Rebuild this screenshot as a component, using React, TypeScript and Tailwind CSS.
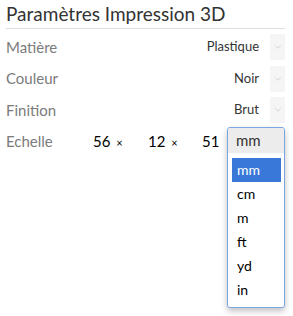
import { ChevronDown } from "lucide-react";

const rows = [
  { label: "Matière", value: "Plastique" },
  { label: "Couleur", value: "Noir" },
  { label: "Finition", value: "Brut" },
];

const units = ["mm", "cm", "m", "ft", "yd", "in"];

export default function App() {
  return (
    <div className="w-[293px] h-[316px] bg-white pl-[6px] pr-[8px] pt-[1px] font-['Lato',sans-serif] text-[#333]">
      <h1 className="text-[19px] leading-[26px] border-b border-[#ddd] pb-[1px]">Paramètres Impression 3D</h1>
      <div className="mt-[5px] flex flex-col gap-[5.5px]">
        {rows.map((r) => (
          <div key={r.label} className="flex items-center h-[26px]">
            <span className="text-[15px] text-[#7b7b7b] flex-1">{r.label}</span>
            <span className="text-[13px] mr-[11px]">{r.value}</span>
            <span className="w-[15px] h-[26px] bg-[#f5f5f5] flex items-center justify-center">
              <ChevronDown size={10} className="text-[#bdbdbd]" strokeWidth={1.5} />
            </span>
          </div>
        ))}
        <div className="flex items-start h-[26px] relative">
          <span className="text-[15px] text-[#7b7b7b] w-[87px] pt-[1px]">Echelle</span>
          <div className="flex items-center text-[15px] text-black pt-[1px]">
            <span className="w-[55px]">56 <span className="text-[11px] ml-[2px]">×</span></span>
            <span className="w-[54px]">12 <span className="text-[11px] ml-[2px]">×</span></span>
            <span>51</span>
          </div>
          <div className="absolute left-[221px] top-[-1.5px] w-[58px] border border-[#7aa6e6] rounded-[3px] bg-white shadow-[0_3px_6px_rgba(0,0,0,0.25)] overflow-hidden">
            <div className="h-[25px] bg-[#ececec] px-[8px] text-[15px] leading-[24px]">mm</div>
            <div className="px-[4px] pr-[3px] pt-[5px] pb-[5px]">
              {units.map((u, i) => (
                <div
                  key={u}
                  className={
                    i === 0
                      ? "h-[24px] bg-[#3a78d8] text-white px-[5px] text-[14px] leading-[24px]"
                      : "h-[24px] text-black px-[5px] text-[14px] leading-[24px]"
                  }
                >
                  {u}
                </div>
              ))}
            </div>
          </div>
        </div>
      </div>
    </div>
  );
}
